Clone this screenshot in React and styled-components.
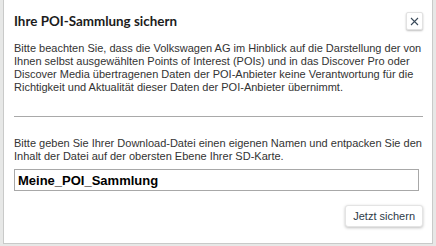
import React from 'react'
import styled, { createGlobalStyle } from 'styled-components'

const GlobalStyle = createGlobalStyle`
  html, body {
    margin: 0;
    padding: 0;
    background: #e7e8e7;
    width: 436px;
    height: 246px;
    overflow: hidden;
  }
`

const Backdrop = styled.div`
  width: 436px;
  height: 246px;
  padding: 0 0 0 3px;
  box-sizing: border-box;
`

const Dialog = styled.div`
  width: 430px;
  height: 244px;
  box-sizing: border-box;
  background: #fff;
  border: 1px solid #c9cac9;
  border-top: none;
  padding: 0 9px 0 10px;
  display: flex;
  flex-direction: column;
  font-family: "Liberation Sans", Arial, sans-serif;
  color: #333;
`

const Header = styled.div`
  display: flex;
  align-items: center;
  justify-content: space-between;
  height: 42px;
`

const Title = styled.h1`
  margin: 0;
  font-family: "Lato", "Noto Sans", sans-serif;
  font-weight: 700;
  font-size: 13.4px;
  color: #1c1c1c;
`

const CloseButton = styled.button`
  width: 17px;
  height: 18px;
  padding: 0;
  border: 1px solid #e2e2e2;
  border-radius: 2px;
  background: #fff;
  box-shadow: 0 1px 2px rgba(0, 0, 0, 0.25);
  display: flex;
  align-items: center;
  justify-content: center;
  color: #3a4a5a;
`

const Paragraph = styled.p`
  margin: 0;
  font-size: 11px;
  line-height: 13px;
  color: #333;
`

const Divider = styled.hr`
  margin: ${p => p.$top}px 0 0;
  border: none;
  border-top: 1px solid #a9a9a9;
  height: 0;
`

const Section = styled.div`
  padding-top: ${p => p.$top}px;
`

const NameInput = styled.input`
  margin-top: 6px;
  width: 405px;
  height: 22px;
  box-sizing: border-box;
  border: 1px solid #a8a8a8;
  padding: 0 3px;
  font-family: "Liberation Sans", Arial, sans-serif;
  font-weight: 700;
  font-size: 13px;
  color: #000;
  outline: none;
`

const Footer = styled.div`
  display: flex;
  justify-content: flex-end;
  padding-top: 14px;
`

const SaveButton = styled.button`
  height: 22px;
  padding: 0 7px;
  border: 1px solid #e4e4e4;
  border-radius: 3px;
  background: #fff;
  box-shadow: 0 1px 3px rgba(0, 0, 0, 0.25);
  font-family: "Liberation Sans", Arial, sans-serif;
  font-size: 11px;
  color: #2d3a48;
`

const CloseIcon = () => (
  <svg width="9" height="9" viewBox="0 0 9 9">
    <path d="M1 1L8 8M8 1L1 8" stroke="currentColor" strokeWidth="1.1" fill="none" />
  </svg>
)

export default function App() {
  return (
    <Backdrop>
      <GlobalStyle />
      <Dialog>
        <Header>
          <Title>Ihre POI-Sammlung sichern</Title>
          <CloseButton aria-label="Schließen"><CloseIcon /></CloseButton>
        </Header>
        <Paragraph>
          Bitte beachten Sie, dass die Volkswagen AG im Hinblick auf die Darstellung der von
          Ihnen selbst ausgewählten Points of Interest (POIs) und in das Discover Pro oder
          Discover Media übertragenen Daten der POI-Anbieter keine Verantwortung für die
          Richtigkeit und Aktualität dieser Daten der POI-Anbieter übernimmt.
        </Paragraph>
        <Divider $top={22} />
        <Section $top={20}>
          <Paragraph>
            Bitte geben Sie Ihrer Download-Datei einen eigenen Namen und entpacken Sie den
            Inhalt der Datei auf der obersten Ebene Ihrer SD-Karte.
          </Paragraph>
          <NameInput defaultValue="Meine_POI_Sammlung" />
        </Section>
        <Footer>
          <SaveButton>Jetzt sichern</SaveButton>
        </Footer>
      </Dialog>
    </Backdrop>
  )
}
